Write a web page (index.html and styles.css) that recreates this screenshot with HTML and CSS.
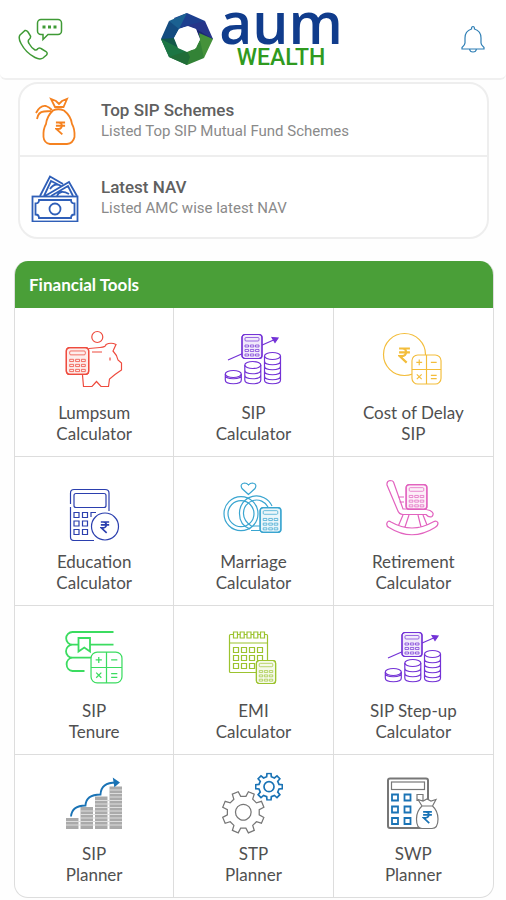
FILE: index.html
```html
<!DOCTYPE html>
<html lang="en">
<head>
  <meta charset="UTF-8">
  <meta name="viewport" content="width=device-width, initial-scale=1.0">
  <title>AUM Wealth</title>
  <link rel="stylesheet" href="styles.css">
</head>
<body>
  <!-- Shared icon parts -->
  <svg class="defs" aria-hidden="true">
    <symbol id="rupee" viewBox="0 0 12 16">
      <path d="M1 2H11M1 5.500H11M1 2H4a3.500 3.500 0 0 1 0 7H1.500L8 15" fill="none" stroke="currentColor" stroke-width="2"/>
    </symbol>
    <symbol id="keypad" viewBox="0 0 22 26">
      <rect x="1" y="1" width="20" height="24" rx="3" fill="#fff"/>
      <rect x="1" y="1" width="20" height="24" rx="3" fill="currentColor" fill-opacity=".1"/>
      <g stroke-width=".7">
        <rect x="4" y="4" width="14" height="3.500" rx="1"/>
        <path d="M4 11.500h3.500v2H4zM9.300 11.500h3.500v2H9.300zM14.500 11.500H18v2h-3.500zM4 16h3.500v2H4zM9.300 16h3.500v2H9.300zM14.500 16H18v2h-3.500zM4 20.500h3.500v2H4zM9.300 20.500h3.500v2H9.300zM14.500 20.500H18v2h-3.500z"/>
      </g>
    </symbol>
    <symbol id="ops" viewBox="0 0 32 32">
      <rect x="1" y="1" width="30" height="30" rx="6" fill="#fff"/>
      <path d="M16 1v30M1 16h30M5.500 8.700h6M8.500 5.700v6M20.500 8.700h6M6 21l5 5M11 21l-5 5M20.500 22h6M20.500 25.500h6"/>
    </symbol>
    <symbol id="gear" viewBox="-21 -21 42 42">
      <path d="M-3.500-15-3-20H3L3.500-15 8.100-13.100 12-16.300 16.300-12 13.100-8.100 15-3.500 20-3V3L15 3.500 13.100 8.100 16.300 12 12 16.300 8.100 13.100 3.500 15 3 20H-3L-3.500 15-8.100 13.100-12 16.300-16.300 12-13.100 8.100-15 3.500-20 3V-3L-15-3.500-13.100-8.100-16.300-12-12-16.300-8.100-13.100Z"/>
      <circle r="7.500"/>
    </symbol>
    <symbol id="growth" viewBox="0 0 64 64">
      <path d="M7 32 56 10.500"/>
      <path d="M51 9.500 57 10 54 14.500Z" fill="currentColor"/>
      <use href="#keypad" x="20" y="5.500" width="22" height="26"/>
      <ellipse cx="12.300" cy="46" rx="8" ry="3.500"/>
      <path d="M4.300 46v6c0 5 16 5 16 0v-6M4.300 47c0 5 16 5 16 0"/>
      <ellipse cx="31.800" cy="37" rx="8" ry="3.500"/>
      <path d="M23.800 37v15c0 5 16 5 16 0V37M23.800 42c0 5 16 5 16 0M23.800 47c0 5 16 5 16 0"/>
      <ellipse cx="51.500" cy="28" rx="8" ry="3.500"/>
      <path d="M43.500 28v24c0 5 16 5 16 0V28M43.500 33c0 5 16 5 16 0M43.500 38c0 5 16 5 16 0M43.500 43c0 5 16 5 16 0M43.500 48c0 5 16 5 16 0"/>
    </symbol>
  </svg>

  <header class="topbar">
    <button class="icon-btn" aria-label="Contact us">
      <svg class="phone" viewBox="0 0 46 44" width="46" height="44">
        <path d="M2 18 7 13.500Q8.500 13 10 15L12.500 19Q13 21 11 22.500Q9.500 24 11 26.500Q13.500 31 17 33Q18.500 33.500 20 31.500Q21.500 30.500 23 31.500L28 34.500Q30 36 28.500 38L25 41Q22 43 17 40.500Q8 36 3 26.500Q0 21 2 18Z"/>
        <path d="M23 2.500H40a3.500 3.500 0 0 1 3.500 3.500V14a3.500 3.500 0 0 1-3.500 3.500H30L25 22.500V17.500H23A3.500 3.500 0 0 1 19.500 14V6A3.500 3.500 0 0 1 23 2.500Z"/>
        <path d="M24.500 10h3M30 10h3M35.500 10h3" stroke-width="3"/>
      </svg>
    </button>

    <div class="logo">
      <svg viewBox="0 0 52 52" width="52" height="52">
        <path d="M26 0 44 8 35 16 27 13 18 16 13 5Z" fill="#1d3f8f"/>
        <path d="M26 0 18 16 13 25 8 8Z" fill="#1b6191"/>
        <path d="M8 8 18 16 13 25 18 35 0 26Z" fill="#144c80"/>
        <path d="M0 26 13 25 18 35 8 44Z" fill="#125849"/>
        <path d="M0 26 18 35 26 38 26 52 8 44Z" fill="#1c7644"/>
        <path d="M44 8 52 26 39 27 35 16 24 13Z" fill="#26358a"/>
        <path d="M52 26 39 27 35 16Z" fill="#1b2871"/>
        <path d="M52 26 43 45 34 36 39 27 38 20Z" fill="#45923a"/>
        <path d="M43 45 26 52 17 45 26 38 34 36 39 27Z" fill="#338336"/>
        <path d="M26 52 8 44 26 38 29 44Z" fill="#216d38"/>
        <path d="M18 16 27 13 35 16 39 26 35 35 26 39 17 35 13 25Z" fill="#fff"/>
      </svg>
      <div class="logo-text">
        <span class="logo-name">aum</span>
        <span class="logo-sub">WEALTH</span>
      </div>
    </div>

    <button class="icon-btn right" aria-label="Notifications">
      <svg class="bell" viewBox="0 0 26 28" width="26" height="28">
        <path d="M13 1.500Q14.500 1.500 14.500 4Q21 6 21 13V18Q21 20 24 22.500V24H2V22.500Q5 20 5 18V13Q5 6 11.500 4Q11.500 1.500 13 1.500ZM9.500 24Q10 27 13 27Q16 27 16.500 24"/>
      </svg>
    </button>
  </header>

  <main>
    <!-- Quick links -->
    <nav class="quick-links">
      <a class="quick-link" href="#top-sip">
        <svg class="orange thick" viewBox="0 0 48 48" width="48" height="48">
          <path d="M22 13.500Q27 11 33 13.500Q40 19 41 27Q44 32 43.500 40Q42 46.500 36 47H19Q13 46 12.500 40Q12 32 15 27Q16 19 22 13.500Z"/>
          <path d="M24 10 20 2 25 4 28 7 31 4 36 2 32.500 10ZM5 16Q9 8 15 9Q18 10 21 13M6 22Q7 15 13 14.500L20 14"/>
          <use href="#rupee" x="24" y="23" width="11" height="16"/>
        </svg>
        <span class="quick-text">
          <strong>Top SIP Schemes</strong>
          <small>Listed Top SIP Mutual Fund Schemes</small>
        </span>
      </a>
      <a class="quick-link" href="#latest-nav">
        <svg class="royal thick" viewBox="0 0 48 48" width="48" height="48">
          <path d="M9 22 19 2.500 32 10M13 22 20 7 28 11M14 22 38 8 46 22M20 22 37 12 42 22M19 15Q24 8 30 12M26 22Q29 15 38 20"/>
          <rect x="1.500" y="22.500" width="45" height="25"/>
          <path d="M8 26H40Q40 29.500 43.500 29.500V40.500Q40 40.500 40 44H8Q8 40.500 4.500 40.500V29.500Q8 29.500 8 26Z"/>
          <circle cx="24" cy="35" r="5.500"/>
        </svg>
        <span class="quick-text">
          <strong>Latest NAV</strong>
          <small>Listed AMC wise latest NAV</small>
        </span>
      </a>
    </nav>

    <!-- Financial tools grid -->
    <section class="tools">
      <h2>Financial Tools</h2>
      <div class="tool-grid">
        <a class="tool" href="#lumpsum">
          <svg class="red" viewBox="0 0 64 64">
            <circle cx="35.300" cy="9" r="5.500"/>
            <path d="M27 20.500 38 19.500Q44 19 44 16.500Q49 14 54 16.500L51 23Q55 27 56 32L59.500 35V42L53 46.500 47.500 51 46.500 58.500H39L34.500 53.500 30 58.500H21.500L20.500 47M30 24H40M48 29.500v3"/>
            <use href="#keypad" x="3" y="18.500" width="25" height="29"/>
          </svg>
          <span>Lumpsum<br>Calculator</span>
        </a>
        <a class="tool" href="#sip">
          <svg class="violet" viewBox="0 0 64 64">
            <use href="#growth" width="64" height="64"/>
          </svg>
          <span>SIP<br>Calculator</span>
        </a>
        <a class="tool" href="#cost-of-delay">
          <svg class="yellow" viewBox="0 0 64 64">
            <circle cx="23.500" cy="26.500" r="21"/>
            <use href="#rupee" x="17" y="18" width="13" height="18"/>
            <use href="#ops" x="30" y="26" width="31" height="31"/>
          </svg>
          <span>Cost of Delay<br>SIP</span>
        </a>

        <a class="tool" href="#education">
          <svg class="navy" viewBox="0 0 64 64">
            <path d="M8.500 27V16Q8.500 12.500 12 12.500H43Q47 12.500 47 16V34M8.500 30V60Q8.500 63.500 12 63.500H32"/>
            <rect x="12" y="16.500" width="32" height="14" rx="2"/>
            <path d="M12 35.500h5v5h-5zM20.500 35.500h5v5h-5zM12 44h5v5h-5zM20.500 44h5v5h-5zM12 52.500h5v5h-5zM20.500 52.500h5v5h-5zM29 40v-4.500h5"/>
            <circle cx="43" cy="49.500" r="13.500" fill="#fff"/>
            <use href="#rupee" x="38" y="43" width="10" height="14"/>
          </svg>
          <span>Education<br>Calculator</span>
        </a>
        <a class="tool" href="#marriage">
          <svg class="sky" viewBox="0 0 64 64">
            <path d="M27.500 17.500 21 11.500Q18.500 7 23.500 6Q26 6 27.500 8Q29 6 31.500 6Q36.500 7 34 11.500Z"/>
            <circle cx="20" cy="36.700" r="17"/>
            <circle cx="20" cy="36.700" r="13"/>
            <path d="M29 52Q18.500 48 18.500 36.700A17 17 0 0 1 51 29M31 49.500Q22.500 44 22.500 36.700A13 13 0 0 1 47 30M30 53.500H42M32 49H40"/>
            <use href="#keypad" x="38" y="29.500" width="23" height="27"/>
          </svg>
          <span>Marriage<br>Calculator</span>
        </a>
        <a class="tool" href="#retirement">
          <svg class="pink" viewBox="0 0 64 64">
            <use href="#keypad" x="23" y="6.500" width="25" height="27"/>
            <path d="M12.500 5 22 32H39Q45 32 49 33.500Q54 36 51 39.500Q48 41 45 37.500H22Q18 37.500 16.500 33L6 8Q5.500 4 9 3.500Q12 3.500 12.500 5ZM17 20h6M18.500 25h4.500"/>
            <path d="M10 45Q31 57 52 45Q56 43 57 46Q57 49 54 50.500Q31 65 8 50.500Q5 49 6 46Q7 43 10 45ZM22 38 17.500 48.500M28 38 24 50M37 38 40 50M42 38 46 48"/>
          </svg>
          <span>Retirement<br>Calculator</span>
        </a>

        <a class="tool" href="#tenure">
          <svg class="green" viewBox="0 0 64 64">
            <path class="thick" d="M51.500 6H10.500a6.300 6.300 0 0 0 0 12.700H16M28 18.700H51.500M16 18.700H10.500a6.500 6.500 0 0 0 0 13H30M10.500 31.700a6.700 6.700 0 0 0 0 13.300H22.500"/>
            <path class="thick" d="M16.500 12H28V25.500L22.300 21.500 16.500 25.500Z"/>
            <use href="#ops" x="28" y="25" width="33" height="33"/>
          </svg>
          <span>SIP<br>Tenure</span>
        </a>
        <a class="tool" href="#emi">
          <svg class="lime" viewBox="0 0 64 64">
            <rect x="8.500" y="8.500" width="38" height="38" rx="1"/>
            <path d="M8.500 17H46.500"/>
            <path d="M12.500 6h4v6h-4zM19.200 6h4v6h-4zM26 6h4v6h-4zM32.800 6h4v6h-4zM39.500 6h4v6h-4z" fill="#fff"/>
            <path d="M12.500 21.500h5v5h-5zM20.500 21.500h5v5h-5zM28.500 21.500h5v5h-5zM36.500 21.500h5v5h-5zM12.500 29.500h5v5h-5zM20.500 29.500h5v5h-5zM28.500 29.500h5v5h-5zM36.500 29.500h5v5h-5zM12.500 37.500h5v5h-5zM20.500 37.500h5v5h-5zM28.500 37.500h5v5h-5z"/>
            <use href="#keypad" x="34" y="33.500" width="22" height="25"/>
          </svg>
          <span>EMI<br>Calculator</span>
        </a>
        <a class="tool" href="#step-up">
          <svg class="violet" viewBox="0 0 64 64">
            <use href="#growth" width="64" height="64"/>
          </svg>
          <span>SIP Step-up<br>Calculator</span>
        </a>

        <a class="tool" href="#sip-planner">
          <svg class="blue thick" viewBox="0 0 64 64">
            <path d="M4 47h12.500v11H4zM18.500 36h12.500v22H18.500zM33 25.500h12.500V58H33zM47.500 15.500H60V58H47.500z" fill="#aaa" stroke="none"/>
            <path d="M4 50.500H60M4 54H60M18 47H60M18 43.500H60M18 40H60M33 36.500H60M33 33H60M33 29.500H60M47 26H60M47 22.500H60M47 19H60" stroke="#ddd" stroke-width="1"/>
            <path d="M9 45.500Q10 34.500 23.500 34.500Q24 23.500 38.500 23.500Q39 11.500 54 11.500"/>
            <path d="M52 8.500 56.500 11.500 53 14.500Z" fill="currentColor"/>
          </svg>
          <span>SIP<br>Planner</span>
        </a>
        <a class="tool" href="#stp-planner">
          <svg viewBox="0 0 64 64">
            <g class="grey" transform="rotate(22.500 22.300 41.300)">
              <use href="#gear" x="0.300" y="19.300" width="44" height="44"/>
            </g>
            <use class="blue bold" href="#gear" x="34" y="1.700" width="28" height="28"/>
          </svg>
          <span>STP<br>Planner</span>
        </a>
        <a class="tool" href="#swp-planner">
          <svg class="grey" viewBox="0 0 64 64">
            <rect x="7" y="7.500" width="40" height="49.500" rx="2" stroke-width="2"/>
            <rect x="10.500" y="11" width="33" height="7.500"/>
            <path class="blue thick" d="M11 23.500h6v6h-6zM23.500 23.500h6v6h-6zM11 35.500h6v6h-6zM23.500 35.500h6v6h-6zM11 47h6v6h-6zM23.500 47h6v6h-6z"/>
            <path d="M36 23.500h6v6h-6z"/>
            <path d="M41 35 37 28.500 42 30 46 28 50 30 55 28.500 51.500 35Q57 40 57 48Q57 57.500 51 57.500H41Q35.500 57.500 35.500 48Q35.500 40 41 35ZM41 35H51.500" fill="#fff"/>
            <use class="blue" href="#rupee" x="41" y="39" width="11" height="14"/>
          </svg>
          <span>SWP<br>Planner</span>
        </a>
      </div>
    </section>
  </main>
</body>
</html>
```

FILE: styles.css
```css
* {
  box-sizing: border-box;
}

body {
  margin: 0;
  font-family: Lato, sans-serif;
  background: #fefefe;
  color: #505050;
}

a {
  color: inherit;
  text-decoration: none;
}

svg {
  display: block;
  fill: none;
  stroke: currentColor;
  stroke-width: 1.2;
}

.defs {
  position: absolute;
  width: 0;
  height: 0;
}

/* Header */
.topbar {
  display: grid;
  grid-template-columns: 1fr auto 1fr;
  align-items: center;
  min-height: 80px;
  padding: 0 20px 0 18px;
  background: #fff;
  border-bottom: 2px solid #f0f0f0;
  border-radius: 0 0 6px 6px;
}

.icon-btn {
  justify-self: start;
  padding: 0;
  border: none;
  background: none;
  cursor: pointer;
}

.icon-btn.right {
  justify-self: end;
}

.phone {
  color: #3f9a35;
  stroke-width: 1.5;
}

.bell {
  color: #2f7fb5;
}

.logo {
  display: flex;
  align-items: center;
  gap: 6px;
}

.logo svg {
  stroke: none;
}

.logo-text {
  display: flex;
  flex-direction: column;
  align-items: center;
  padding-bottom: 6px;
}

.logo-name {
  font-family: "Open Sans", sans-serif;
  font-size: 57px;
  font-weight: 600;
  line-height: 44px;
  color: #103c8c;
}

.logo-sub {
  font-family: Roboto, sans-serif;
  font-size: 23px;
  font-weight: 500;
  line-height: 28px;
  color: #2f9a20;
}

/* Quick links */
.quick-links {
  margin: 2px 17px 0 18px;
  background: #fff;
  border: 2px solid #eee;
  border-radius: 20px;
}

.quick-link {
  display: flex;
  align-items: center;
  gap: 22px;
  padding: 13px 11px 10px;
}

.quick-link + .quick-link {
  padding: 17px 11px 15px;
  border-top: 2px solid #eee;
}

.quick-text {
  display: flex;
  flex-direction: column;
  font-family: Roboto, sans-serif;
}

.quick-text strong {
  font-size: 17px;
  font-weight: 500;
  line-height: 21px;
  color: #606060;
}

.quick-text small {
  font-size: 15px;
  line-height: 21px;
  color: #8a8a8a;
}

/* Tools */
.tools {
  margin: 22px 12px 0 14px;
  overflow: hidden;
  background: #fff;
  border: 1px solid #ddd;
  border-top: none;
  border-radius: 14px;
}

.tools h2 {
  margin: 0 -1px;
  padding: 0 15px;
  font-size: 17px;
  font-weight: 700;
  line-height: 47px;
  color: #fff;
  background: #4a9f38;
}

.tool-grid {
  display: grid;
  grid-template-columns: repeat(3, 1fr);
}

.tool {
  display: flex;
  flex-direction: column;
  align-items: center;
  gap: 10px;
  padding: 20px 0 12px;
  border-right: 1px solid #ddd;
  border-bottom: 1px solid #ddd;
  font-size: 17px;
  line-height: 21px;
  text-align: center;
}

.tool:nth-child(3n) {
  border-right: none;
}

.tool:nth-last-child(-n+3) {
  gap: 8px;
  padding-top: 16px;
  border-bottom: none;
}

.tool svg {
  width: 64px;
  height: 64px;
}

/* Icon colours */
.red { color: #ee4b3e; }
.orange { color: #f58220; }
.yellow { color: #f3bd3b; }
.lime { color: #9cc32f; }
.green { color: #3bdc60; }
.sky { color: #3aa5d0; }
.blue { color: #1a73b5; stroke: currentColor; }
.royal { color: #2f5fb8; }
.navy { color: #2b3fae; }
.violet { color: #7332d6; }
.pink { color: #e263bf; }
.grey { color: #777; stroke: currentColor; }

.thick {
  stroke-width: 1.8;
}

.bold {
  stroke-width: 2.5;
}
```
